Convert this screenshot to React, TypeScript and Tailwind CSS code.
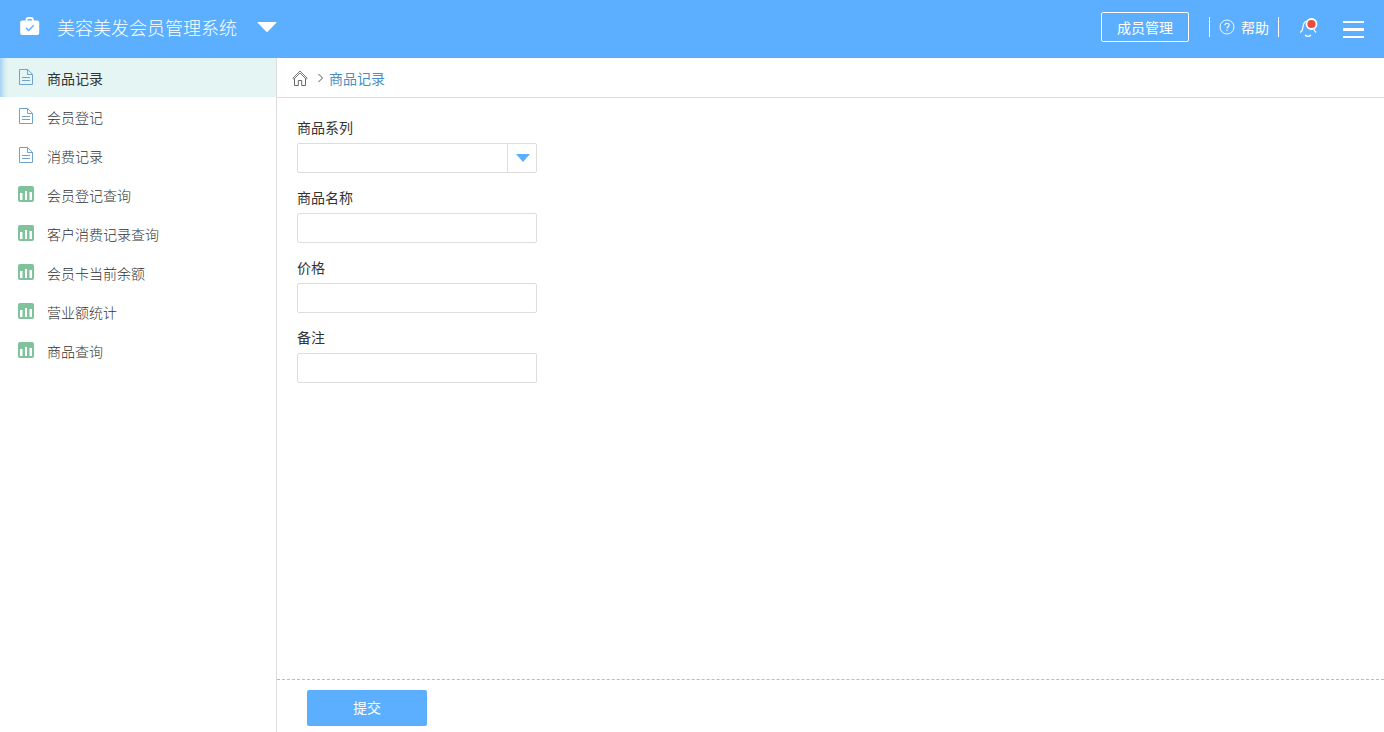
import { useState } from "react";

type NavItem = {
	label: string;
	kind: "form" | "report";
};

const navItems: NavItem[] = [
	{ label: "商品记录", kind: "form" },
	{ label: "会员登记", kind: "form" },
	{ label: "消费记录", kind: "form" },
	{ label: "会员登记查询", kind: "report" },
	{ label: "客户消费记录查询", kind: "report" },
	{ label: "会员卡当前余额", kind: "report" },
	{ label: "营业额统计", kind: "report" },
	{ label: "商品查询", kind: "report" },
];

const textFields = [
	{ id: "name", label: "商品名称" },
	{ id: "price", label: "价格" },
	{ id: "remark", label: "备注" },
];

function BagIcon() {
	return (
		<svg width="20" height="20" viewBox="0 0 20 20" fill="none">
			<path
				d="M6.5 5V2.8Q6.500 1 8.300 1h2.800q1.800 0 1.800 1.800V5"
				stroke="#fff"
				strokeWidth="1.8"
			/>
			<rect x="0.2" y="3.500" width="19" height="14.500" rx="2" fill="#fff" />
			<path d="M6 10.8l2.7 2.700 5-5.300" stroke="#5cafff" strokeWidth="1.4" />
		</svg>
	);
}

function FormIcon() {
	return (
		<svg width="16" height="18" viewBox="0 0 16 18" fill="none" stroke="#6fa3cc">
			<path d="M1.5 1.5h8.2l4.8 4.8v10.2h-13z" />
			<path d="M9.5 1.5v5h5M4 9.5h8M4 12.5h8" />
		</svg>
	);
}

function ReportIcon() {
	return (
		<svg width="16" height="16" viewBox="0 0 16 16">
			<rect width="16" height="16" rx="2" fill="#7fc29b" />
			<path d="M2 7h2.500v7H2zM7 5h2v9H7zM11.500 6H14v8h-2.500z" fill="#fff" />
		</svg>
	);
}

function HomeIcon() {
	return (
		<svg width="16" height="16" viewBox="0 0 16 16" fill="none" stroke="#666">
			<path d="M0.8 8.2L8 1l7.2 7.2-1 1L8 3 1.8 9.2z" strokeWidth="0.9" />
			<path d="M2.5 9v6.5h3.8v-5h3.4v5h3.8V9" />
		</svg>
	);
}

function HelpIcon() {
	return (
		<svg width="16" height="16" viewBox="0 0 16 16" fill="none" stroke="#fff">
			<circle cx="8" cy="8" r="7" strokeWidth="0.9" />
			<path d="M5.9 6.3c0-2.8 4.3-2.7 4.3-.2 0 1.7-2.2 1.6-2.2 3.4M8 10.8V12" strokeWidth="1.1" />
		</svg>
	);
}

function BellIcon() {
	return (
		<svg width="20" height="22" viewBox="0 0 20 22" fill="none">
			<path
				d="M7.5 5C5 6 4.200 8.500 4 11c-.2 3-1.200 4.500-2.800 5.500M15 13c.3 1.500 1 2.500 2 3.500M6 19c1.500 1.800 4.500 1.800 6 0"
				stroke="#fff"
				strokeWidth="1.2"
			/>
			<circle cx="12.500" cy="8" r="5" fill="#e74c3c" stroke="#fff" strokeWidth="1.8" />
		</svg>
	);
}

export default function App() {
	const [active, setActive] = useState(0);

	return (
		<div className="flex min-h-screen flex-col bg-white font-['Noto_Sans_CJK_SC',sans-serif] text-sm text-[#333]">
			{/* Header */}
			<header className="flex h-[58px] shrink-0 items-center justify-between bg-[#5cafff] pr-5 pl-5 text-white">
				<button type="button" className="flex items-center pb-1">
					<BagIcon />
					<span className="ml-[17px] text-lg leading-6 font-light">美容美发会员管理系统</span>
					<svg className="ml-5" width="20" height="10" viewBox="0 0 20 10">
						<path d="M1 0h18q1 0 .3.8L11.2 9.2q-1.2 1-2.4 0L.7.8Q0 0 1 0z" fill="#fff" />
					</svg>
				</button>

				<div className="flex items-center pb-1">
					<button type="button" className="h-[30px] w-[88px] rounded-xs border border-white">
						成员管理
					</button>
					<a
						href="#help"
						className="ml-5 flex h-5 items-center gap-1.5 border-x border-white px-[9px]"
					>
						<HelpIcon />
						帮助
					</a>
					<button type="button" aria-label="消息" className="ml-5">
						<BellIcon />
					</button>
					<button type="button" aria-label="菜单" className="mt-1 ml-6">
						<svg className="block" width="21" height="18" viewBox="0 0 21 18">
							<path d="M0 1h21v2H0zM0 8h21v3H0zM0 16h21v2H0z" fill="#fff" />
						</svg>
					</button>
				</div>
			</header>

			<div className="flex flex-1">
				{/* Sidebar */}
				<nav className="w-[277px] shrink-0 border-r border-[#ddd]">
					{navItems.map((item, i) => (
						<a
							key={item.label}
							href="#nav"
							onClick={() => setActive(i)}
							className={`flex h-[39px] items-center pl-[18px] ${
								active === i
									? "bg-[#e5f5f4] shadow-[inset_8px_0_6px_-6px_#8fc4f0]"
									: "font-light"
							}`}
						>
							<span className="flex w-4 justify-center pb-0.5">
								{item.kind === "form" ? <FormIcon /> : <ReportIcon />}
							</span>
							<span className="ml-[13px] leading-5">{item.label}</span>
						</a>
					))}
				</nav>

				<main className="flex min-w-0 flex-1 flex-col">
					{/* Breadcrumb */}
					<div className="flex h-10 items-center border-b border-[#ddd] pl-[15px]">
						<a href="#home" aria-label="首页">
							<HomeIcon />
						</a>
						<svg className="mr-1 ml-2" width="9" height="10" viewBox="0 0 9 10" fill="none" stroke="#555">
							<path d="M2.5 1l4 4-4 4" />
						</svg>
						<a href="#current" className="text-[#4a8fc4]">
							商品记录
						</a>
					</div>

					<form className="flex flex-1 flex-col" onSubmit={(e) => e.preventDefault()}>
						<div className="flex flex-1 flex-col gap-3.5 px-5 pt-[19px] pb-5">
							<div className="flex flex-col gap-1.5">
								<label htmlFor="series" className="leading-5">
									商品系列
								</label>
								<div className="relative w-60">
									<select
										id="series"
										className="block h-[30px] w-full appearance-none rounded-xs border border-[#ddd] bg-white pr-8 pl-2"
									>
										<option value="" />
									</select>
									<span className="pointer-events-none absolute inset-y-0 right-0 flex w-[30px] items-center justify-center border-l border-[#ddd]">
										<svg width="14" height="8" viewBox="0 0 14 8">
											<path d="M0 0h14L7 8z" fill="#5cafff" />
										</svg>
									</span>
								</div>
							</div>
							{textFields.map((field) => (
								<div key={field.id} className="flex flex-col gap-1.5">
									<label htmlFor={field.id} className="leading-5">
										{field.label}
									</label>
									<input
										id={field.id}
										type="text"
										className="h-[30px] w-60 rounded-xs border border-[#ddd] px-2"
									/>
								</div>
							))}
						</div>

						{/* Submit bar */}
						<div className="border-t border-dashed border-[#bbb] pt-2.5 pb-1.5 pl-[30px]">
							<button
								type="submit"
								className="block h-9 w-[120px] rounded-xs bg-[#5cafff] pb-0.5 text-white"
							>
								提交
							</button>
						</div>
					</form>
				</main>
			</div>
		</div>
	);
}
